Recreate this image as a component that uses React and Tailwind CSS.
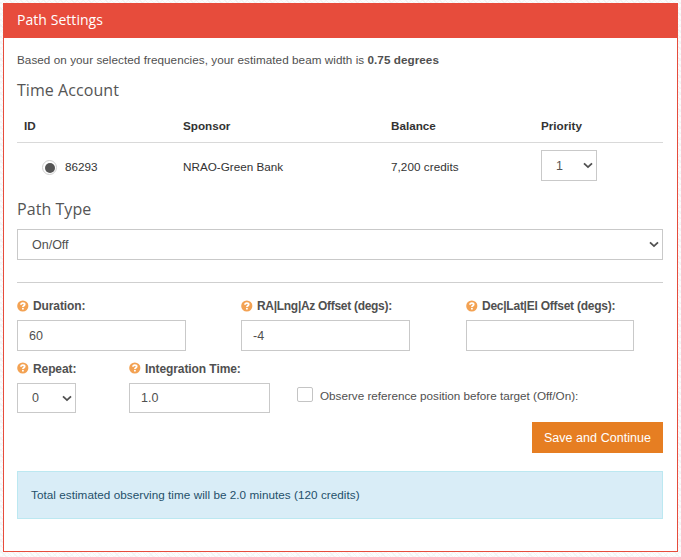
import React from "react";

function Chevron() {
  return (
    <svg className="h-[7px] w-[10px] shrink-0" viewBox="0 0 10 7" fill="none">
      <path d="M1 1.3 5 5.1 9 1.3" stroke="#505050" strokeWidth="1.8" />
    </svg>
  );
}

function Heading({ children, className }) {
  return (
    <h4 className={`font-['Open_Sans',sans-serif] text-[16px] leading-[18px] tracking-[0.06px] text-[#555] ${className}`}>
      {children}
    </h4>
  );
}

function HelpLabel({ children, className = "", iconClass = "-mt-px" }) {
  return (
    <label className={`flex h-4 items-center text-[12px] leading-4 font-bold ${className}`}>
      <svg className={`mr-1 h-[12px] w-[12px] ${iconClass}`} viewBox="0 0 12 12">
        <circle cx="5.8" cy="6" r="5.6" fill="#f3a253" />
        <path d="M4 4.7C4 2.5 7.7 2.6 7.7 4.6 7.7 5.8 5.9 5.7 5.9 7.1" stroke="#fff" strokeWidth="1.8" fill="none" />
        <rect x="5" y="7.9" width="1.8" height="1.6" fill="#fff" />
      </svg>
      <span className="whitespace-nowrap">{children}</span>
    </label>
  );
}

function Box({ children, className }) {
  return (
    <div className={`flex items-center border border-[#c9c9c9] bg-white text-[12.5px] leading-4 ${className}`}>
      {children}
    </div>
  );
}

export default function App() {
  return (
    <div className="h-[557px] w-[681px] bg-[#fcfcfc] bg-[repeating-linear-gradient(45deg,#f3f3f4_0px,#f3f3f4_1px,transparent_1px,transparent_4px),repeating-linear-gradient(-45deg,#f6f6f7_0px,#f6f6f7_1px,transparent_1px,transparent_4px)] pt-[3px] pl-[3px] font-['Liberation_Sans',Arial,sans-serif] text-[11.7px] text-[#505050]">
      <div className="h-[549px] w-[675px] border border-[#e74c3c] bg-white">
        <div className="flex h-[34px] items-center bg-[#e74c3c] pl-[13px] font-['Open_Sans',sans-serif] text-[14px] font-medium tracking-[0.05px] text-white">
          <span className="-mt-[3px]">Path Settings</span>
        </div>
        <div className="pr-[14px] pl-[13px]">
          <p className="flex h-11 items-center tracking-[0.055px] whitespace-pre">
            Based on your selected frequencies, your estimated beam width is <b>0.75 degrees</b>
          </p>
          <Heading className="-mt-px h-[29px]">Time Account</Heading>
          <div className="grid h-[33px] grid-cols-[159px_208px_150px_1fr] items-center border-b border-[#d9d9d9] pl-[7px] text-[11.7px] font-bold text-[#333]">
            <span>ID</span>
            <span>Sponsor</span>
            <span>Balance</span>
            <span>Priority</span>
          </div>
          <div className="grid h-[57px] grid-cols-[159px_208px_150px_1fr] pt-[7px] pl-[7px] text-[#333]">
            <div className="flex h-[35px] items-center pl-[18px]">
              <span className="mr-2 flex h-[15px] w-[15px] items-center justify-center rounded-full border border-[#cfcfcf]">
                <span className="h-[10px] w-[10px] rounded-full bg-[#555]" />
              </span>
              <span className="-mt-[2px]">86293</span>
            </div>
            <span className="flex h-[33px] items-center">NRAO-Green Bank</span>
            <span className="flex h-[33px] items-center tracking-[0.05px]">7,200 credits</span>
            <Box className="h-[31px] w-[56px] justify-between pr-[3px] pl-[14px] text-[#555]">
              1<Chevron />
            </Box>
          </div>
          <Heading className="h-[29px]">Path Type</Heading>
          <Box className="h-[31px] justify-between pr-[3px] pl-[14px]">
            <span>On/Off</span>
            <Chevron />
          </Box>
          <div className="mt-[22px] h-px bg-[#cfcfcf]" />
          <div className="flex pt-[15px]">
            <div className="w-56">
              <HelpLabel className="tracking-[-0.1px]">Duration:</HelpLabel>
              <Box className="mt-[6px] h-[31px] w-[169px] pl-[11px]">60</Box>
            </div>
            <div className="w-[225px]">
              <HelpLabel className="tracking-[-0.3px]">RA|Lng|Az Offset (degs):</HelpLabel>
              <Box className="mt-[6px] h-[31px] w-[169px] pl-[11px]">-4</Box>
            </div>
            <div>
              <HelpLabel className="tracking-[-0.25px]">Dec|Lat|El Offset (degs):</HelpLabel>
              <Box className="mt-[6px] h-[31px] w-[168px] pl-[11px]" />
            </div>
          </div>
          <div className="flex pt-[10px]">
            <div className="w-28">
              <HelpLabel className="tracking-[-0.1px]" iconClass="-mt-[3px]">Repeat:</HelpLabel>
              <Box className="mt-[6px] h-[30px] w-[59px] justify-between pr-[3px] pl-[14px]">
                0<Chevron />
              </Box>
            </div>
            <div className="w-[168px]">
              <HelpLabel className="tracking-[-0.08px]" iconClass="-mt-[3px]">Integration Time:</HelpLabel>
              <Box className="mt-[6px] h-[30px] w-[141px] pl-[11px]">1.0</Box>
            </div>
            <div className="mt-[26px] flex h-4 items-center">
              <span className="-mt-[2px] mr-[7px] h-[15px] w-4 rounded-[2px] border border-[#c4c4c4]" />
              <span className="mt-[2px]">Observe reference position before target (Off/On):</span>
            </div>
          </div>
          <div className="flex justify-end pt-[9px]">
            <button className="h-[31px] w-[131px] bg-[#e67e22] pt-[2px] text-[12.5px] tracking-[0.05px] whitespace-nowrap text-white">Save and Continue</button>
          </div>
          <div className="mt-[18px] flex h-12 items-center border border-[#bce8f1] bg-[#d9edf7] pl-[13px] tracking-[0.05px] text-[#24506a]">
            Total estimated observing time will be 2.0 minutes (120 credits)
          </div>
        </div>
      </div>
    </div>
  );
}
